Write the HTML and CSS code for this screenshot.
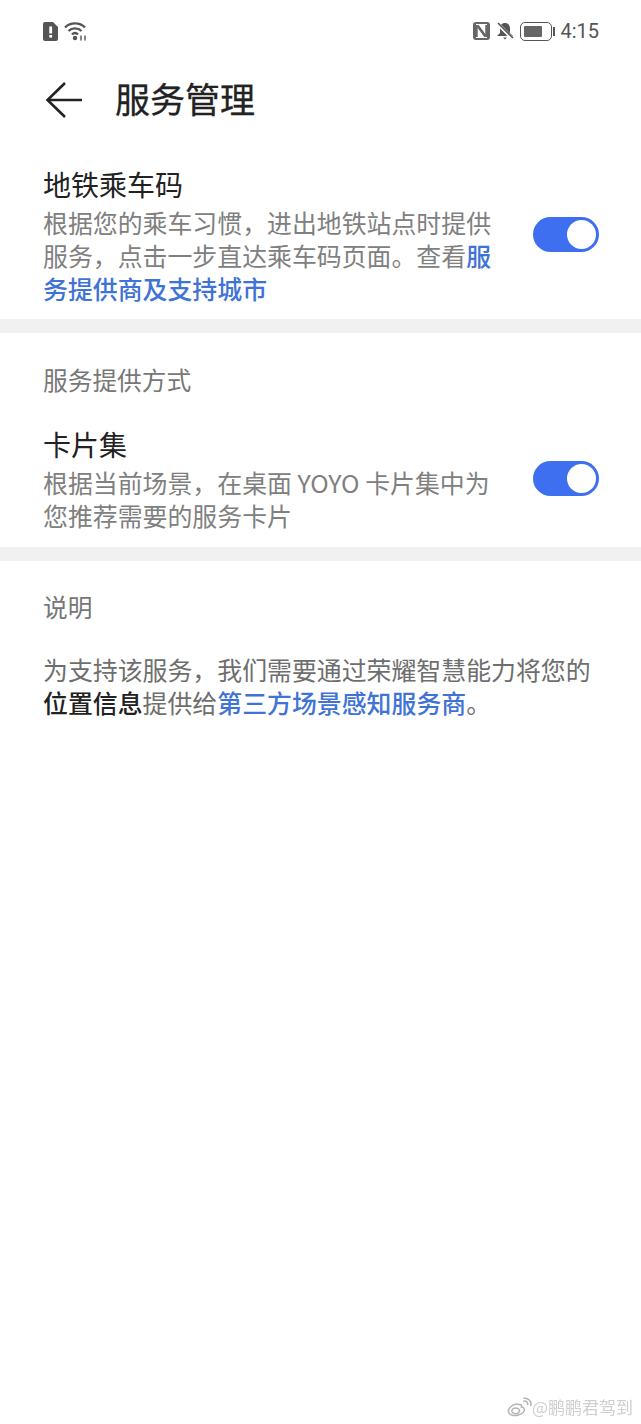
FILE: index.html
```
<!DOCTYPE html>
<html lang="zh-CN">
<head>
    <meta charset="UTF-8">
    <meta name="viewport" content="width=device-width, initial-scale=1.0">
    <title>服务管理</title>
    <link rel="stylesheet" href="styles.css">
</head>
<body>
    <div class="status-bar">
        <div class="status-left">
            <svg width="16" height="19" viewBox="0 0 16 19"><path d="M2 0h8l5 5v12a2 2 0 0 1-2 2H2a2 2 0 0 1-2-2V2a2 2 0 0 1 2-2z" fill="#555"/><rect x="6.300" y="4.500" width="2.800" height="7" fill="#fff"/><rect x="6.300" y="13" width="2.800" height="2.600" fill="#fff"/></svg>
            <svg width="24" height="20" viewBox="0 0 24 20" fill="none" stroke="#555" stroke-width="2.400"><path d="M1 6.500c5.500-5.500 14.500-5.500 20 0"/><path d="M4.500 10c3.500-3.500 9.500-3.500 13 0"/><path d="M8 13.500c1.800-1.800 4.200-1.800 6 0"/><circle cx="11" cy="17" r="2.200" fill="#555" stroke="none"/><path d="M17 14.500v5M21 14.500v5" stroke-width="1.400"/></svg>
        </div>
        <div class="status-right">
            <svg width="17" height="18" viewBox="0 0 17 18"><rect width="17" height="18" rx="3" fill="#666"/><rect x="3" y="2" width="11" height="14" fill="#fff"/><path d="M1.500 3h3.200v12H1.500zM12.300 3h3.200v12h-3.200z" fill="#666"/><path d="M4.500 3.500l8 11" stroke="#666" stroke-width="2.600"/></svg>
            <svg width="18" height="18" viewBox="0 0 18 18"><path d="M9 1c3 0 5 2.200 5 5.500V11l3 3H1l3-3V6.500C4 3.200 6 1 9 1z" fill="#555"/><path d="M7 15.500h4L9 17.500z" fill="#555"/><path d="M1 1l16 16" stroke="#fff" stroke-width="3.500"/><path d="M2 1l15 15" stroke="#555" stroke-width="1.600"/></svg>
            <div class="battery"><div class="battery-level"></div></div>
            <div class="battery-tip"></div>
            <span class="clock">4:15</span>
        </div>
    </div>

    <div class="title-bar">
        <svg class="back" width="38" height="38" viewBox="0 0 38 38" fill="none" stroke="#222" stroke-width="2.600"><path d="M20 2L2.500 19 20 36"/><path d="M3 19h34"/></svg>
        <h1>服务管理</h1>
    </div>

    <div class="section first">
        <div class="row">
            <div class="row-text">
                <div class="row-title">地铁乘车码</div>
                <div class="row-desc">根据您的乘车习惯，进出地铁站点时提供服务，点击一步直达乘车码页面。查看<a class="link">服务提供商及支持城市</a></div>
            </div>
            <div class="switch"><div class="knob"></div></div>
        </div>
    </div>
    <div class="divider"></div>

    <div class="section second">
        <div class="caption">服务提供方式</div>
        <div class="row row-second">
            <div class="row-text">
                <div class="row-title">卡片集</div>
                <div class="row-desc">根据当前场景，在桌面 YOYO 卡片集中为您推荐需要的服务卡片</div>
            </div>
            <div class="switch"><div class="knob"></div></div>
        </div>
    </div>
    <div class="divider"></div>

    <div class="section third">
        <div class="caption">说明</div>
        <p class="note">为支持该服务，我们需要通过荣耀智慧能力将您的<b>位置信息</b>提供给<a class="link">第三方场景感知服务商</a>。</p>
    </div>

    <div class="watermark">
        <svg width="25" height="20" viewBox="0 0 26 20" fill="none" stroke="#b5b5b5" stroke-width="1.600"><path d="M10 7C4 8 1 12 1.500 15c.5 3 5 4.500 9.500 3.500s8-3.500 7-6.500c-.5-1.500-2-2-3-2 .5-2-.5-3-3-2.500z"/><ellipse cx="9" cy="14" rx="4" ry="3"/><path d="M17 4c3-1 5 1 4.500 4M17 1c5-1 9 3 7.500 8"/></svg>
        <span>@鹏鹏君驾到</span>
    </div>
</body>
</html>
```

FILE: styles.css
```
/* page */
body {
    margin: 0;
    height: 1424px;
    position: relative;
    overflow: hidden;
    background-color: #fff;
    color: #222;
    font-family: "Noto Sans CJK SC", "Noto Sans", sans-serif;
}

/* status bar */
.status-bar {
    display: flex;
    justify-content: space-between;
    align-items: center;
    height: 20px;
    padding: 21px 42px 0 43px;
}

.status-left,
.status-right {
    display: flex;
    align-items: center;
}

.status-left {
    gap: 5px;
}

.status-right {
    gap: 6px;
}

.battery {
    width: 32px;
    height: 19px;
    padding: 3px;
    box-sizing: border-box;
    border: 1.5px solid #555;
    border-radius: 5px;
}

.battery-level {
    width: 72%;
    height: 100%;
    background-color: #666;
    border-radius: 1px;
}

.battery-tip {
    width: 2px;
    height: 9px;
    margin-left: -5px;
    background-color: #555;
}

.clock {
    font-family: Roboto, sans-serif;
    font-size: 20px;
    color: #555;
    margin-left: -1px;
}

/* title */
.title-bar {
    display: flex;
    align-items: center;
    height: 76px;
    margin-top: 19px;
    padding-left: 45px;
}

.back {
    margin-top: 4px;
    margin-right: 32px;
}

h1 {
    margin: -2px 0 0;
    font-size: 35px;
    font-weight: 400;
    -webkit-text-stroke: 0.3px #222;
    color: #222;
}

/* sections */
.section {
    padding: 0 42px 14px 43px;
}

.first {
    padding-top: 26px;
}

.second {
    padding-bottom: 15px;
}

.divider {
    height: 14px;
    background-color: #f1f1f1;
}

.row {
    display: flex;
    align-items: center;
    justify-content: space-between;
}

.row-text {
    width: 452px;
}

.row-title {
    font-size: 28px;
    line-height: 44px;
    color: #222;
}

.row-desc {
    font-size: 24.900px;
    line-height: 33px;
    color: #808080;
}

.link {
    color: #3f73d6;
    font-weight: 500;
}

.switch {
    width: 66px;
    height: 35px;
    margin-top: 2px;
    box-sizing: border-box;
    padding: 3px;
    display: flex;
    justify-content: flex-end;
    background-color: #3d6ff0;
    border-radius: 18px;
}

.knob {
    width: 29px;
    height: 29px;
    background-color: #fff;
    border-radius: 50%;
}

.caption {
    font-size: 24.700px;
    line-height: 36px;
    color: #777;
    padding-top: 28px;
}

.third .caption {
    padding-top: 27px;
}

.row-second {
    margin-top: 25px;
}

.note {
    margin: 29px 0 0;
    font-size: 24.900px;
    line-height: 33px;
    color: #6e6e6e;
}

.note b {
    color: #222;
    font-weight: 500;
}

/* watermark sits on top of the screenshot */
.watermark {
    position: absolute;
    right: 8px;
    bottom: 5px;
    display: flex;
    align-items: center;
    gap: 0;
    font-size: 17px;
    color: #cfcfcf;
    filter: blur(0.7px);
}
```
